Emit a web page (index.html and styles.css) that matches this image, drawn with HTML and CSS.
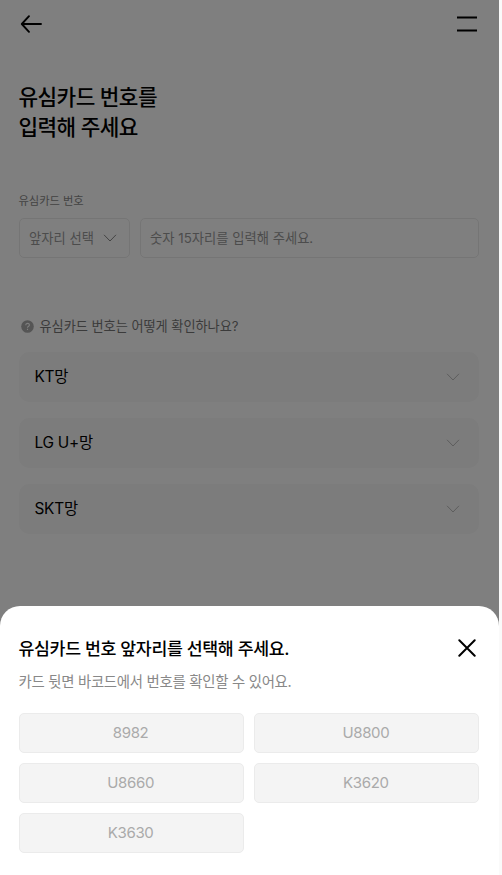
FILE: index.html
```
<!DOCTYPE html>
<html lang="ko">
<head>
  <meta charset="UTF-8">
  <meta name="viewport" content="width=device-width, initial-scale=1.0">
  <title>유심카드 번호 입력</title>
  <link rel="stylesheet" href="styles.css">
</head>
<body>
  <div class="app">
    <header class="header">
      <button class="icon-btn" aria-label="뒤로">
        <svg width="24" height="24" viewBox="0 0 24 24" fill="none" stroke="#000" stroke-width="1.9" stroke-linecap="round" stroke-linejoin="round">
          <path d="M22 12H3M10 4.2L2.8 12L10 19.8"/>
        </svg>
      </button>
      <button class="icon-btn" aria-label="메뉴">
        <svg width="20" height="24" viewBox="0 0 20 24" fill="none" stroke="#000" stroke-width="2">
          <path d="M0 5.5H20M0 18.5H20"/>
        </svg>
      </button>
    </header>

    <main class="content">
      <h1 class="title">유심카드 번호를<br>입력해 주세요</h1>

      <p class="label">유심카드 번호</p>
      <div class="fields">
        <button class="select">
          <span>앞자리 선택</span>
          <svg width="14" height="8" viewBox="0 0 14 8" fill="none" stroke="#888"><path d="M1 .8L7 7L13 .8"/></svg>
        </button>
        <div class="number">숫자 15자리를 입력해 주세요.</div>
      </div>

      <p class="help">
        <svg width="13" height="13" viewBox="0 0 13 13" fill="none">
          <circle cx="6.5" cy="6.5" r="6.3" fill="#aaa"/>
          <path d="M4.7 5.2C4.7 2.8 8.4 2.8 8.4 5C8.4 6.3 6.5 6.3 6.5 7.8M6.5 8.8V10" stroke="#fff" stroke-width="1.1"/>
        </svg>
        유심카드 번호는 어떻게 확인하나요?
      </p>
      <ul class="networks">
        <li class="network">
          <span>KT망</span>
          <svg width="14" height="8" viewBox="0 0 14 8" fill="none" stroke="#bbb"><path d="M1 .8L7 7L13 .8"/></svg>
        </li>
        <li class="network">
          <span>LG U+망</span>
          <svg width="14" height="8" viewBox="0 0 14 8" fill="none" stroke="#bbb"><path d="M1 .8L7 7L13 .8"/></svg>
        </li>
        <li class="network">
          <span>SKT망</span>
          <svg width="14" height="8" viewBox="0 0 14 8" fill="none" stroke="#bbb"><path d="M1 .8L7 7L13 .8"/></svg>
        </li>
      </ul>
    </main>

    <div class="dim">
      <section class="sheet">
        <div class="sheet-head">
          <h2 class="sheet-title">유심카드 번호 앞자리를 선택해 주세요.</h2>
          <button class="icon-btn" aria-label="닫기">
            <svg width="18" height="18" viewBox="0 0 18 18" fill="none" stroke="#000" stroke-width="2" stroke-linecap="round">
              <path d="M1.3 1.3L16.7 16.7M16.7 1.3L1.3 16.7"/>
            </svg>
          </button>
        </div>
        <p class="sheet-desc">카드 뒷면 바코드에서 번호를 확인할 수 있어요.</p>
        <div class="options">
          <button class="option">8982</button>
          <button class="option">U8800</button>
          <button class="option">U8660</button>
          <button class="option">K3620</button>
          <button class="option">K3630</button>
        </div>
      </section>
    </div>
  </div>
</body>
</html>
```
FILE: styles.css
```
* {
  box-sizing: border-box;
  margin: 0;
  padding: 0;
}
body {
  background-color: #fafafa;
  font-family: Inter, "Noto Sans CJK KR", sans-serif;
  color: #000;
}
button {
  font: inherit;
  border: none;
  background: none;
  cursor: pointer;
}
svg {
  display: block;
  flex-shrink: 0;
}
.app {
  position: relative;
  width: 499px;
  height: 875px;
  overflow: hidden;
  background-color: #fff;
}
.header {
  display: flex;
  justify-content: space-between;
  align-items: center;
  height: 48px;
  padding: 0 22px 0 19px;
}
.content {
  padding: 34px 20px 0 18.5px;
}
.title {
  font-size: 21.3px;
  font-weight: 500;
  line-height: 30px;
  letter-spacing: -0.55px;
}
.label {
  margin-top: 50px;
  font-size: 11.3px;
  line-height: 18px;
  letter-spacing: -0.05px;
  color: #888;
}
.fields {
  display: flex;
  gap: 10px;
  margin-top: 8px;
  font-size: 13.3px;
}
.select, .number {
  display: flex;
  align-items: center;
  height: 40px;
  padding: 0 9.6px 1px;
  border: 1px solid #ebebeb;
  border-radius: 5px;
  color: #999;
}
.select {
  justify-content: space-between;
  width: 111px;
  padding-right: 12px;
}
.number {
  flex: 1;
}
.help {
  display: flex;
  align-items: center;
  gap: 6px;
  margin-top: 58px;
  padding-left: 2px;
  font-size: 13.2px;
  line-height: 20px;
  letter-spacing: -0.05px;
  color: #777;
}
.networks {
  display: flex;
  flex-direction: column;
  gap: 16px;
  margin-top: 16px;
  list-style: none;
}
.network {
  display: flex;
  justify-content: space-between;
  align-items: center;
  height: 50px;
  padding: 0 19px 0 16px;
  border-radius: 10px;
  background-color: #f8f8f8;
  font-size: 15.4px;
  letter-spacing: -0.25px;
}
.network span {
  padding-bottom: 4px;
}
.dim {
  position: absolute;
  inset: 0;
  display: flex;
  align-items: flex-end;
  background-color: rgba(0, 0, 0, 0.5);
}
.sheet {
  width: 100%;
  height: 269px;
  padding: 30px 20px 0 18.5px;
  border-radius: 20px 20px 0 0;
  background-color: #fff;
}
.sheet-head {
  display: flex;
  justify-content: space-between;
  align-items: center;
  height: 24px;
  padding-right: 3px;
}
.sheet-title {
  padding-top: 2px;
  font-size: 17.3px;
  font-weight: 500;
  line-height: 24px;
  letter-spacing: -0.35px;
}
.sheet-desc {
  margin-top: 12px;
  font-size: 14.4px;
  line-height: 20px;
  letter-spacing: -0.27px;
  color: #888;
}
.options {
  display: grid;
  grid-template-columns: 1fr 1fr;
  gap: 10px;
  margin-top: 21px;
}
.option {
  height: 40px;
  padding: 0 1px 1px 0;
  border: 1px solid #ebebeb;
  border-radius: 5px;
  background-color: #f4f4f4;
  font-size: 15px;
  letter-spacing: -0.35px;
  color: #aaa;
}
```
